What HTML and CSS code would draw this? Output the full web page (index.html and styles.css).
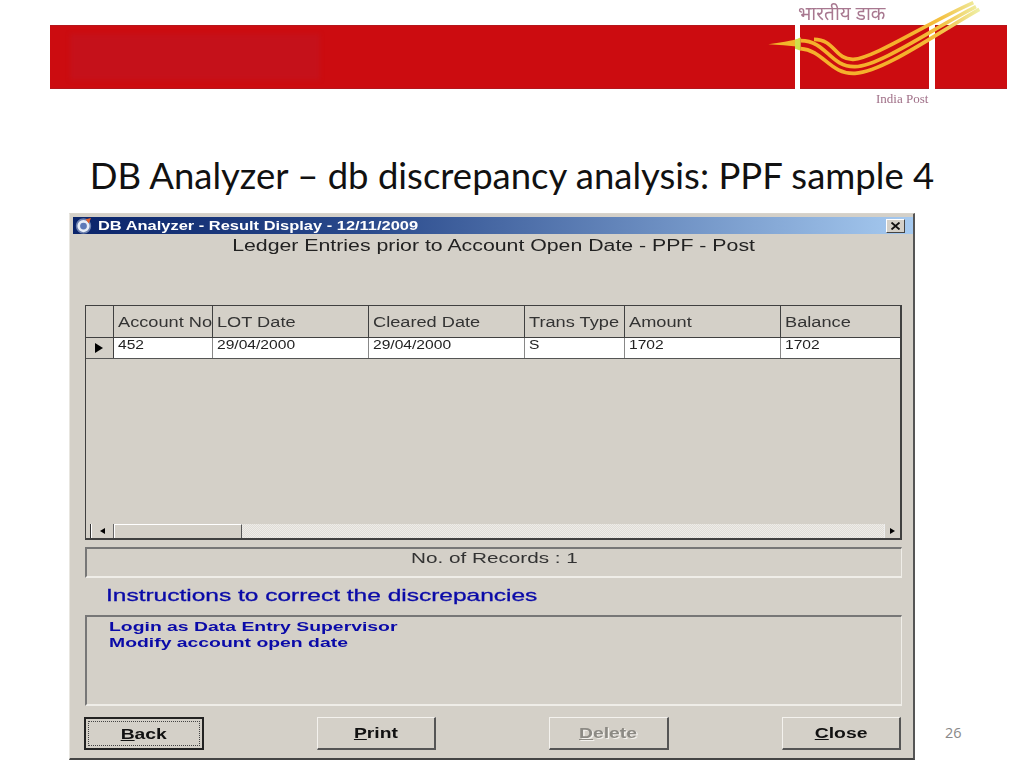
FILE: index.html
```html
<!DOCTYPE html>
<html lang="en">
<head>
<meta charset="utf-8">
<title>DB Analyzer</title>
<link rel="stylesheet" href="styles.css">
</head>
<body>
<header class="banner">
  <div class="seg seg-a"><div class="patch"></div></div>
  <div class="seg seg-b"></div>
  <div class="seg seg-c"></div>
  <svg class="swoosh" viewBox="0 0 780 360" width="260" height="120" aria-hidden="true">
    <defs>
      <linearGradient id="fade" gradientUnits="userSpaceOnUse" x1="500" y1="0" x2="720" y2="0">
        <stop offset="0" stop-color="#f5b02c"/>
        <stop offset="0.45" stop-color="#f4c040"/>
        <stop offset="1" stop-color="#eef0a8"/>
      </linearGradient>
    </defs>
    <path d="M85 133 C120 128 150 122 178 116 L178 140 C145 137 115 135 85 133Z" fill="#f2b52a"/>
    <path d="M165 120 L182 112 L182 152 L165 146Z" fill="#cfe04a"/>
    <g fill="none" stroke="url(#fade)" stroke-width="11">
      <path d="M222 118 C285 118 285 180 340 178 C400 176 560 70 700 8"/>
      <path d="M182 122 C260 122 270 202 345 200 C420 198 580 85 708 20"/>
      <path d="M182 146 C250 150 270 224 345 220 C430 216 590 100 718 28"/>
    </g>
  </svg>
  <span class="hindi">भारतीय डाक</span>
  <span class="india-post">India Post</span>
</header>

<h1 class="title">DB Analyzer – db discrepancy analysis: PPF sample 4</h1>

<div class="stage">
  <section class="window">
    <div class="titlebar">
      <svg class="app-icon" viewBox="0 0 16 16" width="19" height="17" aria-hidden="true">
        <circle cx="8" cy="8.5" r="6.5" fill="#e8eef8" stroke="#6b7fae" stroke-width="1.5"/>
        <circle cx="8" cy="8.5" r="3.2" fill="#5d79b8"/>
        <path d="M10 2 L15 1 L13 6Z" fill="#e8602c"/>
      </svg>
      <span class="titlebar-text">DB Analyzer - Result Display - 12/11/2009</span>
      <span class="close-x">
        <svg viewBox="0 0 10 8" width="11" height="8" aria-hidden="true"><path d="M1 0.5 L9 7.5 M9 0.5 L1 7.5" stroke="#111" stroke-width="1.8"/></svg>
      </span>
    </div>

    <div class="report-title"><span class="wide">Ledger Entries prior to Account Open Date - PPF - Post</span></div>

    <div class="grid">
      <div class="cols head">
        <div class="cell"></div>
        <div class="cell"><span class="wide-l">Account No</span></div>
        <div class="cell"><span class="wide-l">LOT Date</span></div>
        <div class="cell"><span class="wide-l">Cleared Date</span></div>
        <div class="cell"><span class="wide-l">Trans Type</span></div>
        <div class="cell"><span class="wide-l">Amount</span></div>
        <div class="cell"><span class="wide-l">Balance</span></div>
      </div>
      <div class="cols row">
        <div class="cell indicator"><i class="arrow"></i></div>
        <div class="cell"><span class="wide-l">452</span></div>
        <div class="cell"><span class="wide-l">29/04/2000</span></div>
        <div class="cell"><span class="wide-l">29/04/2000</span></div>
        <div class="cell"><span class="wide-l">S</span></div>
        <div class="cell"><span class="wide-l">1702</span></div>
        <div class="cell"><span class="wide-l">1702</span></div>
      </div>
      <div class="grid-empty"></div>
      <div class="hscroll">
        <span class="sb-tick"></span>
        <span class="sb-btn"><i class="tri-left"></i></span>
        <span class="sb-thumb"></span>
        <span class="sb-track"></span>
        <span class="sb-btn sb-right"><i class="tri-right"></i></span>
      </div>
    </div>

    <div class="sunken records"><span class="wide">No. of Records : 1</span></div>

    <div class="instr-head"><span class="wide-l">Instructions to correct the discrepancies</span></div>

    <div class="sunken instr-box">
      <div><span class="wide-l">Login as Data Entry Supervisor</span></div>
      <div><span class="wide-l">Modify account open date</span></div>
    </div>

    <div class="buttons">
      <button class="btn btn-default"><span class="focus"><span class="wide"><u>B</u>ack</span></span></button>
      <button class="btn"><span class="wide"><u>P</u>rint</span></button>
      <button class="btn btn-disabled"><span class="wide"><u>D</u>elete</span></button>
      <button class="btn"><span class="wide"><u>C</u>lose</span></button>
    </div>
  </section>
  <div class="page-no">26</div>
</div>
</body>
</html>
```
FILE: styles.css
```css
* { box-sizing: border-box; }
html, body { margin: 0; padding: 0; }
body {
  width: 1024px;
  height: 768px;
  padding-top: 25px;
  overflow: hidden;
  background: #fff;
  font-family: "Liberation Sans", Arial, sans-serif;
}

/* banner */
.banner {
  position: relative;
  display: flex;
  height: 64px;
  margin: 0 17px 0 50px;
}
.seg { height: 100%; background: #cc0c10; border-top: 1px solid #b5161c; border-bottom: 1px solid #b5161c; }
.seg-a { width: 745px; margin-right: 5px; padding: 8px 0 0 20px; }
.seg-b { width: 129px; margin-right: 6px; }
.seg-c { width: 72px; }
.patch { width: 250px; height: 46px; background: #c5111a; filter: blur(2px); }
.swoosh { position: absolute; left: 690px; top: -25px; filter: blur(0.4px); }
.hindi {
  position: absolute;
  left: 748px;
  top: -25px;
  font: 19px/26px "Noto Sans", "Noto Sans CJK SC", "DejaVu Sans", sans-serif;
  color: #a87890;
  white-space: nowrap;
  filter: blur(0.4px);
}
.india-post {
  position: absolute;
  left: 826px;
  top: 66px;
  font: 13px "Liberation Serif", serif;
  color: #a07088;
  white-space: nowrap;
  filter: blur(0.4px);
}

/* slide title */
.title {
  margin: 64px 0 0;
  height: 44px;
  text-align: center;
  font: 400 36.5px/44px Lato, "Open Sans", sans-serif;
  color: #111;
  white-space: nowrap;
}

/* stage */
.stage {
  display: flex;
  margin: 16px 0 0 69px;
}
.page-no {
  align-self: flex-end;
  margin: 0 0 19px 30px;
  font: 14.5px/16px "Open Sans", sans-serif;
  color: #898989;
}

/* window */
.window {
  display: flex;
  flex-direction: column;
  width: 846px;
  height: 547px;
  padding: 3px 11px 8px 4px;
  background: #d4d0c8;
  border-top: 1px solid #d8d4cc;
  border-left: 1px solid #e8e6e0;
  border-right: 2px solid #555;
  border-bottom: 2px solid #444;
}
.titlebar {
  display: flex;
  align-items: center;
  flex: none;
  height: 17px;
  margin: 0 -11px 0 -1px;
  padding: 0 8px 0 1px;
  background: linear-gradient(90deg, #0a246a 0%, #2a4a8c 35%, #a6caf0 100%);
  color: #fff;
}
.app-icon { flex: none; margin-right: 5px; }
.titlebar-text {
  display: inline-block;
  flex: none;
  margin-right: auto;
  font-size: 12px;
  font-weight: 700;
  transform: scaleX(1.37);
  transform-origin: left center;
  white-space: nowrap;
}
.close-x {
  display: flex;
  align-items: center;
  justify-content: center;
  width: 19px;
  height: 14px;
  background: #d4d0c8;
  border: 1px solid;
  border-color: #fff #444 #444 #fff;
}
.wide { display: inline-block; transform: scaleX(1.3); white-space: nowrap; }
.wide-l { display: inline-block; transform: scaleX(1.3); transform-origin: left center; white-space: nowrap; }

.report-title {
  flex: none;
  height: 22px;
  margin-top: 2px;
  padding-left: 11px;
  text-align: center;
  font-size: 16px;
  line-height: 20px;
  color: #222;
}
.report-title .wide { transform: scaleX(1.33); }

/* data grid */
.grid {
  display: flex;
  flex-direction: column;
  flex: none;
  height: 235px;
  margin: 47px 0 0 11px;
  border: 1px solid #404040;
  border-right-width: 2px;
  border-bottom-width: 2px;
}
.cols { display: grid; grid-template-columns: 28px 99px 156px 156px 100px 156px 1fr; }
.head { height: 32px; border-bottom: 1px solid #404040; }
.head .cell {
  padding: 8px 0 0 4px;
  font-size: 14px;
  line-height: 16px;
  color: #333;
  border-right: 1px solid #404040;
}
.head .cell:last-child { border-right: 0; }
.row { height: 21px; background: #fff; border-bottom: 1px solid #555; }
.row .cell {
  padding: 1px 0 0 4px;
  font-size: 12px;
  line-height: 12px;
  color: #222;
  border-right: 1px solid #888;
}
.row .cell:last-child { border-right: 0; }
.row .indicator { background: #d4d0c8; border-right: 1px solid #404040; padding: 5px 0 0 9px; }
.arrow {
  display: block;
  width: 0;
  height: 0;
  border-left: 8px solid #000;
  border-top: 5px solid transparent;
  border-bottom: 5px solid transparent;
}
.grid-empty { flex: 1; }
.hscroll { display: flex; height: 14px; }
.sb-tick { width: 5px; border-right: 1px solid #333; }
.sb-btn {
  display: flex;
  align-items: center;
  justify-content: center;
  width: 23px;
  background: #d4d0c8;
  border-right: 1px solid #666;
  border-left: 1px solid #fff;
}
.sb-right { width: 16px; border-left: 1px solid #eee; border-right: 0; }
.sb-thumb {
  width: 128px;
  background: #d4d0c8;
  border-top: 1px solid #fff;
  border-left: 1px solid #fff;
  border-right: 1px solid #555;
}
.sb-track {
  flex: 1;
  background: repeating-conic-gradient(#e0ddd7 0 25%, #eeece8 0 50%) 0 0 / 2px 2px;
}
.tri-left, .tri-right { display: block; width: 0; height: 0; border-top: 3.5px solid transparent; border-bottom: 3.5px solid transparent; }
.tri-left { border-right: 5px solid #000; }
.tri-right { border-left: 5px solid #000; }

/* sunken panels */
.sunken {
  border: 1px solid;
  border-width: 2px 1px 2px 2px;
  border-color: #777 #efede8 #efede8 #777;
}
.records {
  flex: none;
  height: 31px;
  margin: 7px 0 0 11px;
  text-align: center;
  font-size: 15px;
  line-height: 18px;
  color: #333;
}
.records .wide { transform: scaleX(1.38); }
.instr-head {
  flex: none;
  height: 22px;
  margin: 8px 0 0 32px;
  font-size: 17px;
  line-height: 20px;
  color: #0a0aa8;
  -webkit-text-stroke: 0.3px #0a0aa8;
}
.instr-head .wide-l { transform: scaleX(1.44); }
.instr-box {
  flex: none;
  height: 91px;
  margin: 7px 0 0 11px;
  padding: 2px 0 0 22px;
  font-size: 13px;
  font-weight: 700;
  line-height: 15.5px;
  color: #0a0aa8;
}
.instr-box .wide-l { transform: scaleX(1.49); }

/* buttons */
.buttons {
  display: flex;
  flex: none;
  justify-content: space-between;
  margin: 11px 1px 0 10px;
}
.btn {
  width: 119.5px;
  height: 33px;
  padding: 0;
  background: #d4d0c8;
  border: 1px solid;
  border-width: 1px 2px 2px 1px;
  border-color: #f4f2ee #555 #555 #f4f2ee;
  font: 700 14px "Liberation Sans", Arial, sans-serif;
  color: #111;
}
.btn .wide { transform: scaleX(1.38); }
.btn-default { border: 2px solid #222; padding: 2px; }
.focus {
  display: flex;
  align-items: center;
  justify-content: center;
  height: 100%;
  border: 1px dotted #444;
}
.btn-disabled { color: #8c8a84; text-shadow: 1px 1px 0 #f4f2ee; }
```
